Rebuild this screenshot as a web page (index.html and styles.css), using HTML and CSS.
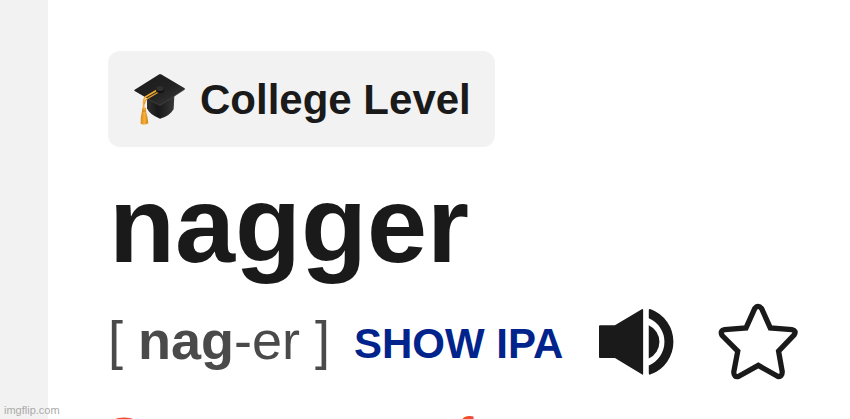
FILE: index.html
```html
<!DOCTYPE html>
<html lang="en">
<head>
    <meta charset="UTF-8">
    <meta name="viewport" content="width=device-width, initial-scale=1.0">
    <title>nagger</title>
    <link rel="stylesheet" href="styles.css">
</head>
<body>
    <main class="entry">
        <div class="level">
            <svg class="cap" viewBox="24 24 162 162">
                <defs>
                    <linearGradient id="board" x1="0" y1="0" x2="1" y2="1">
                        <stop offset="0" stop-color="#1c1c1c"/>
                        <stop offset="0.55" stop-color="#222"/>
                        <stop offset="1" stop-color="#3c3c3c"/>
                    </linearGradient>
                    <linearGradient id="skull" x1="0" y1="0" x2="1" y2="0">
                        <stop offset="0" stop-color="#303030"/>
                        <stop offset="0.4" stop-color="#181818"/>
                        <stop offset="1" stop-color="#383838"/>
                    </linearGradient>
                    <linearGradient id="tassel" x1="0" y1="0" x2="1" y2="0">
                        <stop offset="0" stop-color="#d98a1c"/>
                        <stop offset="0.5" stop-color="#f5ae38"/>
                        <stop offset="1" stop-color="#cf8018"/>
                    </linearGradient>
                </defs>
                <path fill="url(#skull)" d="M66 100 L66 130 Q73 149 105 161 Q135 153 146 132 L148 92 Z"/>
                <path fill="url(#board)" d="M103 28 Q105 27 108 28 L179 70 Q181 72 178 74 L108 120 Q104 122 100 119 L29 78 Q26 76 29 74 Z"/>
                <path fill="none" stroke="#505050" stroke-width="1.5" d="M179 73 L107 120 Q104 122 100 119 L72 103"/>
                <path fill="none" stroke="#f2ac35" stroke-width="5" d="M97 75 L66 93 Q56 98 56 110 L56 128"/>
                <path fill="none" stroke="#e39c28" stroke-width="4" d="M101 81 L72 98 Q60 103 58 118"/>
                <ellipse cx="105" cy="75" rx="12" ry="9" fill="#101010"/>
                <ellipse cx="105" cy="71" rx="11" ry="7" fill="#303030"/>
                <path fill="url(#tassel)" d="M51 130 Q57 124 63 130 L63 138 Q68 155 70 175 Q59 182 47 176 Q46 154 51 138 Z"/>
                <path stroke="#a96c1e" stroke-width="2" d="M51 138 L63 138"/>
            </svg>
            <span class="level-text">College Level</span>
        </div>

        <h1 class="word">nagger</h1>

        <div class="pronunciation">
            <span class="spelling">[ <b>nag</b>-er ]</span>
            <button class="show-ipa">SHOW IPA</button>
            <svg class="speaker" viewBox="27 39 226 203">
                <path d="M30 90 H75 L156 42 Q160 40 160 44 V236 Q160 241 156 238 L75 189 H30 Q27 189 27 186 V93 Q27 90 30 90 Z"/>
                <path d="M177 90 A55 55 0 0 1 177 190 Z"/>
                <path d="M177 45 Q177 40 183 42 A104.5 104.5 0 0 1 183 238 Q177 241 177 235 V211 A77 77 0 0 0 177 69 Z"/>
            </svg>
            <svg class="star" viewBox="24 22 240 232">
                <path d="M108 97 L134 39 Q144 25 155 39 L181 97 L246 102 Q261 105 253 118 L206 167 L217 229 Q217 246 203 243 L145 210 L86 243 Q71 247 71 230 L83 167 L36 120 Q28 105 44 102 Z"/>
            </svg>
        </div>

        <h2 class="synonyms">See synonyms for</h2>
    </main>
    <div class="watermark">imgflip.com</div>
</body>
</html>
```
FILE: styles.css
```css
* {
    box-sizing: border-box;
}
body {
    margin: 0;
    height: 419px;
    padding-left: 48px;
    background-color: #f2f2f2;
    font-family: "Liberation Sans", Arial, sans-serif;
    color: #1a1a1a;
    overflow: hidden;
}
.entry {
    height: 419px;
    padding: 51px 0 0 60px;
    background-color: white;
    overflow: hidden;
}
.level {
    display: flex;
    align-items: center;
    gap: 13px;
    width: 387px;
    height: 96px;
    padding-left: 25px;
    background-color: #f2f2f2;
    border-radius: 12px;
}
.cap {
    width: 54px;
    height: 54px;
    margin-top: 2px;
}
.level-text {
    margin-top: 2px;
    font-size: 42px;
    font-weight: bold;
    line-height: 48px;
    white-space: nowrap;
}
.word {
    margin: 16px 0 0 1px;
    font-size: 108px;
    line-height: 124px;
}
.pronunciation {
    display: flex;
    align-items: flex-start;
    height: 80px;
    margin-top: 15px;
}
.spelling {
    width: 246px;
    margin-top: 7px;
    font-size: 54px;
    line-height: 62px;
    color: #4a4a4a;
    white-space: nowrap;
}
.show-ipa {
    width: 245px;
    margin: 18px 0 0;
    padding: 0;
    border: none;
    background: none;
    font-family: inherit;
    font-size: 42px;
    font-weight: bold;
    line-height: 48px;
    text-align: left;
    color: #00248b;
    white-space: nowrap;
    cursor: pointer;
}
.speaker {
    width: 75px;
    height: 68px;
    margin-top: 6px;
    fill: #1a1a1a;
}
.star {
    width: 80px;
    height: 77px;
    margin: 1px 0 0 44px;
    fill: none;
    stroke: #1a1a1a;
    stroke-width: 16;
}
.synonyms {
    margin: 25px 0 0;
    font-size: 48px;
    line-height: 55px;
    color: #f04e30;
    white-space: nowrap;
}
.watermark {
    position: absolute;
    left: 4px;
    bottom: 2px;
    font-size: 11px;
    line-height: 13px;
    color: #aaa;
}
```
